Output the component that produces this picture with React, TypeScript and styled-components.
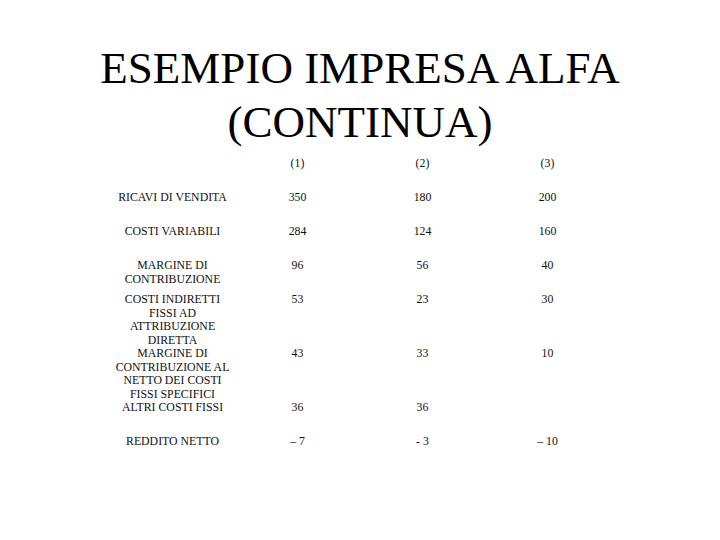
import React from 'react';
import styled, { createGlobalStyle } from 'styled-components';

const GlobalStyle = createGlobalStyle`
  html, body {
    margin: 0;
    padding: 0;
    background: #ffffff;
  }
  body {
    font-family: "Liberation Serif", "Times New Roman", serif;
    color: #000;
  }
`;

const Slide = styled.div`
  width: 720px;
  height: 540px;
  display: flex;
  flex-direction: column;
  align-items: center;
  padding-top: 41px;
  box-sizing: border-box;
`;

const Title = styled.h1`
  margin: 0;
  font-weight: normal;
  font-size: 45px;
  line-height: 54px;
  text-align: center;
`;

const Table = styled.div`
  margin-top: 8px;
  margin-left: 0;
  display: grid;
  grid-template-columns: repeat(4, 125px);
  grid-auto-rows: minmax(34px, auto);
  font-size: 11.8px;
  line-height: 13.5px;
  color: #111;
`;

const Cell = styled.div<{ $label?: boolean }>`
  text-align: center;
  white-space: pre-line;
  padding: 0 ${({ $label }) => ($label ? '1px' : '0')};
`;

type Row = { label: string; values: string[] };

const rows: Row[] = [
  { label: '', values: ['(1)', '(2)', '(3)'] },
  { label: 'RICAVI DI VENDITA', values: ['350', '180', '200'] },
  { label: 'COSTI VARIABILI', values: ['284', '124', '160'] },
  { label: 'MARGINE  DI\nCONTRIBUZIONE', values: ['96', '56', '40'] },
  { label: 'COSTI INDIRETTI\nFISSI AD\nATTRIBUZIONE\nDIRETTA', values: ['53', '23', '30'] },
  {
    label: 'MARGINE DI\nCONTRIBUZIONE AL\nNETTO DEI COSTI\nFISSI SPECIFICI',
    values: ['43', '33', '10'],
  },
  { label: 'ALTRI COSTI FISSI', values: ['36', '36', ''] },
  { label: 'REDDITO NETTO', values: ['– 7', '- 3', '– 10'] },
];

export default function App() {
  return (
    <>
      <GlobalStyle />
      <Slide>
        <Title>
          ESEMPIO IMPRESA ALFA
          <br />
          (CONTINUA)
        </Title>
        <Table>
          {rows.map((row, i) => (
            <React.Fragment key={i}>
              <Cell $label>{row.label}</Cell>
              {row.values.map((v, j) => (
                <Cell key={j}>{v}</Cell>
              ))}
            </React.Fragment>
          ))}
        </Table>
      </Slide>
    </>
  );
}
